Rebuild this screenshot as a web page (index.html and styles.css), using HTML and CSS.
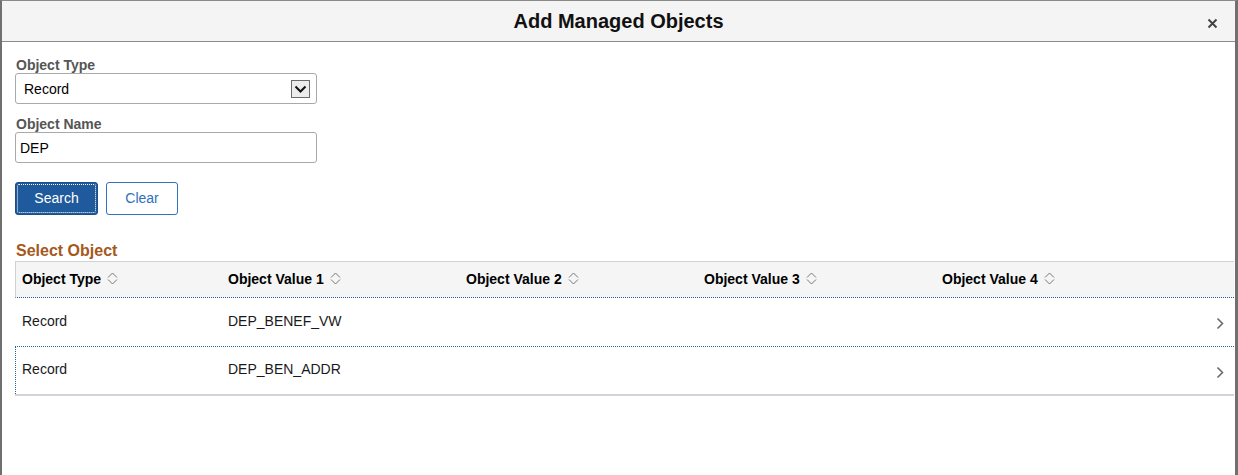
FILE: index.html
```html
<!DOCTYPE html>
<html>
<head>
<meta charset="utf-8">
<link rel="stylesheet" href="styles.css">
</head>
<body>
<div class="dialog">
  <header class="dlg-head">
    <h1 class="dlg-title">Add Managed Objects</h1>
    <button class="close" aria-label="Close">
      <svg width="11" height="11" viewBox="0 0 11 11"><path d="M1.5 1.5 L9.5 9.5 M9.5 1.5 L1.5 9.5" stroke="#444" stroke-width="2" fill="none"/></svg>
    </button>
  </header>
  <main class="dlg-body">
    <div class="field">
      <label class="lbl">Object Type</label>
      <div class="select">
        <span>Record</span>
        <span class="sel-btn">
          <svg width="13" height="9" viewBox="0 0 13 9"><path d="M1.5 1.5 L6.5 6.5 L11.5 1.5" stroke="#111" stroke-width="2" fill="none"/></svg>
        </span>
      </div>
    </div>
    <div class="field">
      <label class="lbl">Object Name</label>
      <div class="input">DEP</div>
    </div>
    <div class="buttons">
      <button class="btn primary"><span>Search</span></button>
      <button class="btn secondary">Clear</button>
    </div>
    <h2 class="section">Select Object</h2>
    <div class="grid">
      <div class="row head">
        <div class="cell">Object Type <svg class="sort" width="11" height="13" viewBox="0 0 11 13"><path d="M1 5.5 L5.5 1 L10 5.5 M1 7.5 L5.5 12 L10 7.5" stroke="#777" stroke-width="1" fill="none"/></svg></div>
        <div class="cell">Object Value 1 <svg class="sort" width="11" height="13" viewBox="0 0 11 13"><path d="M1 5.5 L5.5 1 L10 5.5 M1 7.5 L5.5 12 L10 7.5" stroke="#777" stroke-width="1" fill="none"/></svg></div>
        <div class="cell">Object Value 2 <svg class="sort" width="11" height="13" viewBox="0 0 11 13"><path d="M1 5.5 L5.5 1 L10 5.5 M1 7.5 L5.5 12 L10 7.5" stroke="#777" stroke-width="1" fill="none"/></svg></div>
        <div class="cell">Object Value 3 <svg class="sort" width="11" height="13" viewBox="0 0 11 13"><path d="M1 5.5 L5.5 1 L10 5.5 M1 7.5 L5.5 12 L10 7.5" stroke="#777" stroke-width="1" fill="none"/></svg></div>
        <div class="cell">Object Value 4 <svg class="sort" width="11" height="13" viewBox="0 0 11 13"><path d="M1 5.5 L5.5 1 L10 5.5 M1 7.5 L5.5 12 L10 7.5" stroke="#777" stroke-width="1" fill="none"/></svg></div>
        <div class="cell"></div>
      </div>
      <div class="row data">
        <div class="cell">Record</div>
        <div class="cell">DEP_BENEF_VW</div>
        <div class="cell"></div>
        <div class="cell"></div>
        <div class="cell"></div>
        <div class="cell go"><svg width="8" height="13" viewBox="0 0 8 13"><path d="M1.5 1.5 L6.5 6.5 L1.5 11.5" stroke="#666" stroke-width="1.5" fill="none"/></svg></div>
      </div>
      <div class="row data focus">
        <div class="cell">Record</div>
        <div class="cell">DEP_BEN_ADDR</div>
        <div class="cell"></div>
        <div class="cell"></div>
        <div class="cell"></div>
        <div class="cell go"><svg width="8" height="13" viewBox="0 0 8 13"><path d="M1.5 1.5 L6.5 6.5 L1.5 11.5" stroke="#666" stroke-width="1.5" fill="none"/></svg></div>
      </div>
    </div>
  </main>
</div>
</body>
</html>
```
FILE: styles.css
```css
* { box-sizing: border-box; }
html, body { margin: 0; padding: 0; background: #fff; }
body { font-family: "Liberation Sans", Arial, sans-serif; color: #000; }

.dialog {
  width: 1238px;
  height: 475px;
  border-top: 1px solid #8a8a8a;
  border-left: 2px solid #707070;
  border-right: 3px solid #707070;
  background: #fff;
  display: flex;
  flex-direction: column;
}

.dlg-head {
  height: 41px;
  background: #f4f4f4;
  border-bottom: 1px solid #8a8a8a;
  display: flex;
  align-items: center;
  justify-content: center;
  position: relative;
}
.dlg-title {
  margin: 0;
  font-size: 20px;
  font-weight: bold;
  color: #111;
  padding-top: 1px;
  margin-left: 0;
}
.close {
  position: absolute;
  right: 17px;
  top: 17px;
  border: 0;
  background: none;
  padding: 0;
  width: 11px;
  height: 11px;
  display: flex;
}

.dlg-body {
  padding: 16px 0 0 13px;
  display: flex;
  flex-direction: column;
}

.field { display: flex; flex-direction: column; margin-bottom: 13px; }
.lbl {
  font-size: 14px;
  font-weight: bold;
  color: #555;
  line-height: 15px;
  margin-left: 1px;
}
.select, .input {
  width: 302px;
  height: 31px;
  border: 1px solid #a9a9a9;
  border-radius: 3px;
  font-size: 14px;
  display: flex;
  align-items: center;
}
.select { padding: 0 6px 0 8px; justify-content: space-between; }
.sel-btn {
  width: 19px;
  height: 18px;
  border: 1px solid #6b6b6b;
  background: #ececec;
  display: flex;
  align-items: center;
  justify-content: center;
  padding-top: 1px;
}
.input { padding-left: 4px; }

.buttons { display: flex; gap: 8px; margin-top: 6px; }
.btn {
  height: 33px;
  border-radius: 3px;
  font-family: "Liberation Sans", Arial, sans-serif;
  font-size: 14px;
  padding: 0;
}
.primary {
  width: 83px;
  background: #1f5a9c;
  border: 1px solid #1a4f8a;
  color: #fff;
  padding: 1px;
}
.primary span {
  display: flex;
  align-items: center;
  justify-content: center;
  width: 100%;
  height: 100%;
  border: 1px dotted #fff;
  border-radius: 2px;
  padding-bottom: 1px;
}
.secondary {
  width: 72px;
  background: #fff;
  border: 1px solid #2f73c0;
  color: #2f6fbd;
  padding-bottom: 1px;
}

.section {
  margin: 26px 0 0 1px;
  font-size: 16px;
  font-weight: bold;
  color: #a5581c;
  line-height: 20px;
}

.grid {
  margin-top: 0;
  width: 1219px;
  border-top: 1px solid #d2d2d2;
  border-bottom: 2px solid #d0d4d8;
}
.row {
  display: grid;
  grid-template-columns: 206px 238px 238px 238px 238px 1fr;
  align-items: center;
}
.row.head {
  height: 36px;
  background: #f5f5f5;
  border-left: 1px solid #d2d2d2;
  border-bottom: 1px dotted #2a5f9e;
  font-weight: bold;
  font-size: 14px;
}
.row.head .cell { padding-bottom: 2px; }
.row.data {
  height: 48px;
  font-size: 14px;
  color: #1a1a1a;
  border-left: 1px solid transparent;
}
.row.data .cell { padding-bottom: 2px; }
.row.data + .row.data { border-top: 1px dotted #2a5f9e; }
.row.data + .row.data .cell { padding-bottom: 3px; }
.row.focus { border-left: 1px dotted #2a5f9e; }
.cell {
  padding-left: 6px;
  display: flex;
  align-items: center;
  gap: 6px;
}
.sort { margin-top: -1px; }
.row.data .go, .row.data + .row.data .go { justify-content: flex-end; padding-right: 10px; padding-top: 3px; padding-bottom: 0; }
```
